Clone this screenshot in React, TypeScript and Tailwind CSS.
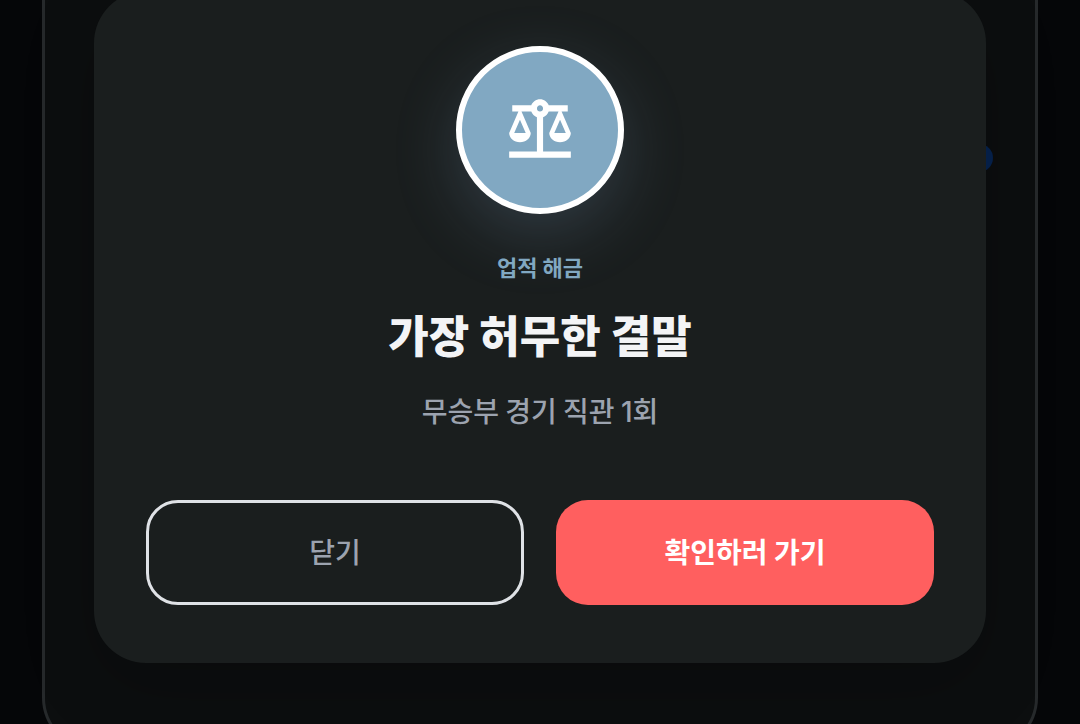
import React from 'react';
import { MdBalance } from 'react-icons/md';

const achievement = {
  label: '업적 해금',
  title: '가장 허무한 결말',
  condition: '무승부 경기 직관',
  count: 1,
};

const AchievementDialog: React.FC = () => {
  return (
    <section
      role="dialog"
      aria-labelledby="achievement-title"
      className="relative z-10 rounded-[52px] bg-[#1a1e1e] px-[52px] pt-[55px] pb-[58px] flex flex-col items-center text-center shadow-[0_24px_72px_rgba(0,0,0,0.2)]"
    >
      <div className="size-[168px] rounded-full border-6 border-white bg-[#81a8c2] flex items-center justify-center text-white shadow-[0_20px_64px_rgba(129,160,194,0.22)]">
        <MdBalance className="size-[74px]" aria-hidden="true" />
      </div>

      <p className="mt-9 text-[22px] leading-8 font-bold text-[#81a8c2]">{achievement.label}</p>
      <h1 id="achievement-title" className="mt-[22px] text-[44px] leading-[60px] font-black text-[#f3f4f6]">
        {achievement.title}
      </h1>
      <p className="mt-[26px] text-[28px] leading-10 font-medium text-[#9ca3af]">
        {achievement.condition} <span className="font-['Inter',sans-serif]">{achievement.count}</span>회
      </p>

      <div className="mt-[68px] w-full grid grid-cols-2 gap-8 text-[28px] leading-10">
        <button type="button" className="h-[105px] rounded-[32px] border-3 border-[#dfe2e6] pb-1 font-medium text-[#9ca3af]">
          닫기
        </button>
        <button type="button" className="h-[105px] rounded-[32px] bg-[#ff5f5f] pb-1 font-bold text-white">
          확인하러 가기
        </button>
      </div>
    </section>
  );
};

const App: React.FC = () => {
  return (
    <main className="h-screen overflow-hidden bg-[#050608] px-[42px] font-['Noto_Sans_CJK_KR',sans-serif]">
      <div className="relative rounded-b-[52px] border-x-3 border-b-3 border-[#26292b] bg-[#0c0e0f] px-[49px] pb-[84px] flow-root">
        {/* Notification dot of the screen behind the dialog */}
        <span className="absolute top-[144px] right-[42px] size-7 rounded-full bg-[#06234f]"></span>
        <div className="-mt-[9px]">
          <AchievementDialog />
        </div>
      </div>
    </main>
  );
};

export default App;
